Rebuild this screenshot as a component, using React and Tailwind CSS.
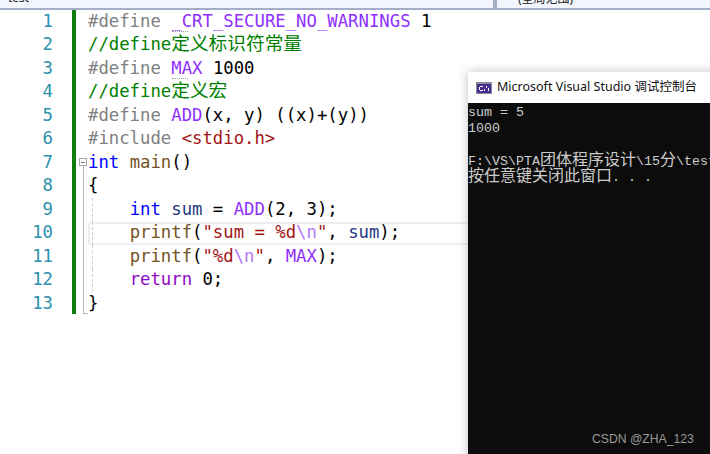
const mono = "font-['DejaVu_Sans_Mono','Noto_Sans_CJK_SC',monospace]";

const P = ({ c, children }) => <span className={c}>{children}</span>;
const Cjk = ({ children }) => <span className="text-[18.7px] leading-none">{children}</span>;
const Con = ({ children }) => <span className="text-[16px] leading-none">{children}</span>;
const pre = "text-[#808080]";
const mac = "text-[#8f2fff]";
const com = "text-[#008000]";
const kw = "text-[#0000ff]";
const fn = "text-[#74531f]";
const str = "text-[#a31515]";
const esc = "text-[#b776fb]";
const vr = "text-[#1f377f]";
const ctl = "text-[#8f08c4]";
const sp = " ";
const ind = "    ";

const lines = [
  <><P c={pre}>#define</P>{sp}<P c={mac}>_CRT_SECURE_NO_WARNINGS</P>{sp}1</>,
  <P c={com}>//define<Cjk>定义标识符常量</Cjk></P>,
  <><P c={pre}>#define</P>{sp}<P c={mac}>MAX</P>{sp}1000</>,
  <P c={com}>//define<Cjk>定义宏</Cjk></P>,
  <><P c={pre}>#define</P>{sp}<P c={mac}>ADD</P>(x, y) ((x)+(y))</>,
  <><P c={pre}>#include</P>{sp}<P c={str}>&lt;stdio.h&gt;</P></>,
  <><P c={kw}>int</P>{sp}<P c={fn}>main</P>()</>,
  <>{"{"}</>,
  <>{ind}<P c={kw}>int</P>{sp}<P c={vr}>sum</P>{" = "}<P c={mac}>ADD</P>(2, 3);</>,
  <>{ind}<P c={fn}>printf</P>(<P c={str}>"sum = %d</P><P c={esc}>\n</P><P c={str}>"</P>,{sp}<P c={vr}>sum</P>);</>,
  <>{ind}<P c={fn}>printf</P>(<P c={str}>"%d</P><P c={esc}>\n</P><P c={str}>"</P>,{sp}<P c={mac}>MAX</P>);</>,
  <>{ind}<P c={ctl}>return</P>{sp}0;</>,
  <>{"}"}</>,
];

function CodeRow({ n, children }) {
  const current = n === 10;
  return (
    <div className="flex h-[23.5px] items-center">
      <div className="w-[53px] text-right text-[#2b91af] shrink-0">{n}</div>
      <div className="w-[19px] shrink-0" />
      <div className={`w-[4px] bg-[#107c10] shrink-0 self-start ${n === 13 ? "h-[22px]" : "h-full"}`} />
      <div className="w-[12px] h-full shrink-0 relative">
        {n === 7 && (
          <div className="absolute left-[3px] top-[7px] w-[8px] h-[8px] border border-[#a8a8a8] bg-white flex items-center justify-center">
            <div className="w-[4px] h-px bg-[#777]" />
          </div>
        )}
        {n === 7 && <div className="absolute left-[7px] top-[15px] bottom-0 w-px bg-[#b8b8b8]" />}
        {n > 7 && n < 13 && <div className="absolute left-[7px] top-0 bottom-0 w-px bg-[#b8b8b8]" />}
        {n === 13 && (
          <div className="absolute left-[7px] top-0 h-[22px] w-[5px] border-l border-b border-[#b8b8b8]" />
        )}
      </div>
      <div className="flex-1 h-full relative flex items-center whitespace-pre">
        {current && (
          <div className="absolute left-0 right-0 top-0 h-[23px] border-y-2 border-l-2 border-[#eeeef2]" />
        )}
        {n >= 9 && n <= 12 && (
          <div className="absolute left-[4px] top-0 bottom-0 border-l border-dashed border-[#cfcfcf]" />
        )}
        {(n === 1 || n === 3) && (
          <div className="absolute left-[84px] top-[21px] w-[16px] border-t border-dotted border-[#a0a0a0]" />
        )}
        <span className="relative">{children}</span>
      </div>
    </div>
  );
}

export default function App() {
  return (
    <div className={`relative w-[710px] h-[454px] overflow-hidden bg-white ${mono} text-[17.3px] text-black`}>
      <div className="flex h-[10px] bg-[#f3f5fc] border-b-2 border-[#a4aec6] overflow-hidden font-['Noto_Sans','Noto_Sans_CJK_SC',sans-serif] text-[12px] leading-[10px] text-[#222]">
        <div className="w-[493px] pl-[8px] -mt-[7px]">test</div>
        <div className="w-[4px] bg-[#a4aec6]" />
        <div className="flex-1 pl-[21px] -mt-[6px]">(全局范围)</div>
      </div>
      <div>
        {lines.map((l, i) => (
          <CodeRow key={i} n={i + 1}>{l}</CodeRow>
        ))}
      </div>

      <div className="absolute left-[468px] top-[72px] w-[260px] h-[400px] flex flex-col shadow-[0_0_10px_rgba(0,0,0,0.25)]">
        <div className="h-[31px] bg-white flex items-center pl-[8px] gap-[5px] shrink-0 font-['Noto_Sans','Noto_Sans_CJK_SC',sans-serif] text-[12.5px] text-[#111] whitespace-nowrap">
          <svg width="16" height="12" viewBox="0 0 16 12">
            <rect width="16" height="12" fill="#8a8a9a" />
            <rect x="1" y="2" width="14" height="9" fill="#4b2d8f" />
            <rect x="4" y="4" width="3" height="1" fill="#fff" />
            <rect x="3" y="5" width="1" height="3" fill="#fff" />
            <rect x="4" y="8" width="3" height="1" fill="#fff" />
            <rect x="8" y="7" width="1" height="2" fill="#fff" />
            <rect x="10" y="4" width="1" height="2" fill="#fff" />
            <rect x="12" y="6" width="1" height="3" fill="#fff" />
          </svg>
          <span>Microsoft Visual Studio 调试控制台</span>
        </div>
        <div className="flex-1 bg-[#0c0c0c] text-[#cccccc] font-['Liberation_Mono','Noto_Sans_CJK_SC',monospace] text-[13.33px] leading-[16px] whitespace-pre pt-[2px]">
          <div className="h-[16px]">sum = 5</div>
          <div className="h-[16px]">1000</div>
          <div className="h-[16px]" />
          <div className="h-[16px]">F:\VS\PTA<Con>团体程序设计</Con>\15<Con>分</Con>\test</div>
          <div className="h-[16px]"><Con>按任意键关闭此窗口</Con>. . .</div>
        </div>
      </div>

      <div className="absolute left-[592px] top-[430px] font-['Liberation_Sans',sans-serif] text-[12.2px] text-[#9a9a9a] whitespace-nowrap">
        CSDN @ZHA_123
      </div>
    </div>
  );
}
